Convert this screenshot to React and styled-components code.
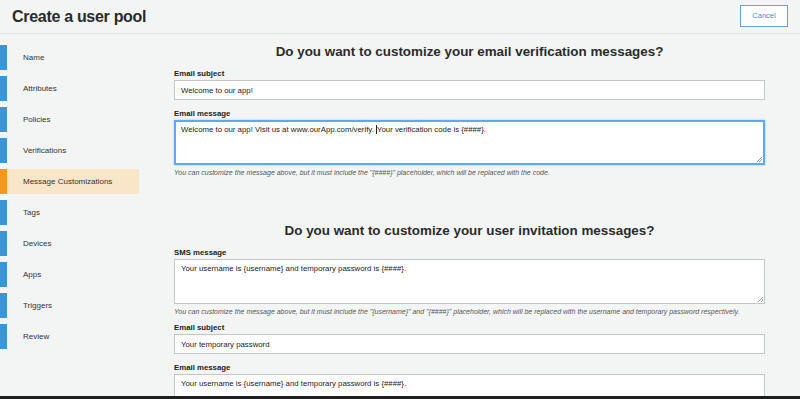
import styled, { createGlobalStyle } from "styled-components";

const GlobalStyle = createGlobalStyle`
  html, body {
    margin: 0;
    padding: 0;
    background: #f3f5f5;
    font-family: "Liberation Sans", Arial, sans-serif;
    color: #333;
  }
  * { box-sizing: border-box; }
`;

const Page = styled.div`
  width: 800px;
  height: 399px;
  display: flex;
  flex-direction: column;
  overflow: hidden;
  background: #f3f5f5;
`;

const Header = styled.header`
  height: 34px;
  flex: none;
  display: flex;
  align-items: center;
  justify-content: space-between;
  padding: 0 12px 0 12px;
  border-bottom: 1px solid #e2e4e4;
`;

const Title = styled.h1`
  margin: 0;
  font-size: 16px;
  font-weight: 700;
  color: #2b2b2b;
  letter-spacing: -0.3px;
`;

const CancelButton = styled.button`
  width: 48px;
  height: 22px;
  margin-top: -2px;
  background: #fff;
  border: 1px solid #5ba6e6;
  color: #3b8fd6;
  font-family: inherit;
  font-size: 7.5px;
  padding: 0;
`;

const Body = styled.div`
  flex: 1;
  display: flex;
  min-height: 0;
`;

const Sidebar = styled.nav`
  width: 139px;
  flex: none;
  padding-top: 11px;
  display: flex;
  flex-direction: column;
  gap: 6px;
`;

const NavItem = styled.div`
  height: 25px;
  display: flex;
  align-items: center;
  padding-left: 16px;
  font-size: 8px;
  color: #333;
  background: ${(p) => (p.$active ? "#f9e6c9" : "transparent")};
  border-left: 7px solid ${(p) => (p.$active ? "#f7981c" : "#3a96d8")};
`;

const Main = styled.main`
  flex: 1;
  padding: 10px 35px 0 35px;
  overflow: hidden;
`;

const Section = styled.section`
  & + & {
    margin-top: 48px;
  }
`;

const Heading = styled.h2`
  margin: 0 0 9px 0;
  text-align: center;
  font-size: 13.4px;
  line-height: 16px;
  font-weight: 700;
  color: #2b2b2b;
`;

const Field = styled.div`
  margin-bottom: 9px;
`;

const Label = styled.div`
  font-size: 7.8px;
  line-height: 10px;
  font-weight: 700;
  color: #222;
  margin-bottom: 1px;
`;

const TextInput = styled.div`
  height: 20px;
  background: #fff;
  border: 1px solid #c3c6c6;
  font-size: 7.8px;
  display: flex;
  align-items: center;
  padding: 0 6px;
  color: #222;
`;

const TextArea = styled.div`
  position: relative;
  height: 45px;
  background: #fff;
  border: ${(p) => (p.$focused ? "2px solid #5ea9f2" : "1px solid #c3c6c6")};
  box-shadow: ${(p) => (p.$focused ? "0 0 2px rgba(94,169,242,0.6)" : "none")};
  font-size: 7.8px;
  line-height: 10px;
  padding: ${(p) => (p.$focused ? "3px 5px" : "4px 6px")};
  color: #222;
  &::after {
    content: "";
    position: absolute;
    right: 1px;
    bottom: 1px;
    width: 5px;
    height: 5px;
    background: linear-gradient(135deg, transparent 45%, #999 45%, #999 55%, transparent 55%, transparent 70%, #999 70%, #999 80%, transparent 80%);
  }
`;

const Caret = styled.span`
  display: inline-block;
  width: 1px;
  height: 9px;
  background: #222;
  vertical-align: -2px;
`;

const Help = styled.div`
  margin: 3px 0 -2px 0;
  font-size: 7px;
  line-height: 9px;
  font-style: italic;
  color: #555;
`;

const BottomEdge = styled.div`
  height: 3px;
  flex: none;
  background: #1e1f1f;
`;

const steps = [
  "Name",
  "Attributes",
  "Policies",
  "Verifications",
  "Message Customizations",
  "Tags",
  "Devices",
  "Apps",
  "Triggers",
  "Review",
];

export default function App() {
  return (
    <>
      <GlobalStyle />
      <Page>
        <Header>
          <Title>Create a user pool</Title>
          <CancelButton>Cancel</CancelButton>
        </Header>
        <Body>
          <Sidebar>
            {steps.map((s) => (
              <NavItem key={s} $active={s === "Message Customizations"}>
                {s}
              </NavItem>
            ))}
          </Sidebar>
          <Main>
            <Section>
              <Heading>Do you want to customize your email verification messages?</Heading>
              <Field>
                <Label>Email subject</Label>
                <TextInput>Welcome to our app!</TextInput>
              </Field>
              <Field>
                <Label>Email message</Label>
                <TextArea $focused>
                  Welcome to our app! Visit us at www.ourApp.com/verify. <Caret />Your verification code is {"{####}"}.
                </TextArea>
                <Help>
                  You can customize the message above, but it must include the "{"{####}"}" placeholder, which will be replaced with the code.
                </Help>
              </Field>
            </Section>
            <Section>
              <Heading>Do you want to customize your user invitation messages?</Heading>
              <Field>
                <Label>SMS message</Label>
                <TextArea>
                  Your username is {"{username}"} and temporary password is {"{####}"}.
                </TextArea>
                <Help>
                  You can customize the message above, but it must include the "{"{username}"}" and "{"{####}"}" placeholder, which will be replaced with the username and temporary password respectively.
                </Help>
              </Field>
              <Field>
                <Label>Email subject</Label>
                <TextInput>Your temporary password</TextInput>
              </Field>
              <Field>
                <Label>Email message</Label>
                <TextArea>
                  Your username is {"{username}"} and temporary password is {"{####}"}.
                </TextArea>
              </Field>
            </Section>
          </Main>
        </Body>
        <BottomEdge />
      </Page>
    </>
  );
}
